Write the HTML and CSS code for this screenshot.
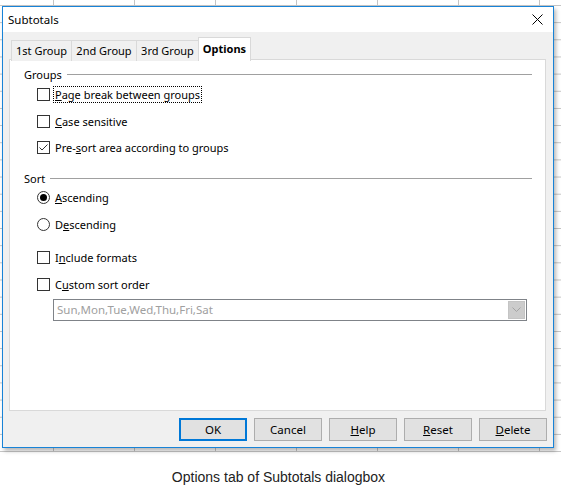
FILE: index.html
```html
<!DOCTYPE html>
<html>
<head>
<meta charset="utf-8">
<link rel="stylesheet" href="styles.css">
</head>
<body>
<div class="sheet">
  <div class="dialog">
    <div class="titlebar">
      <span class="title">Subtotals</span>
      <svg class="close" width="11" height="11" viewBox="0 0 11 11"><path d="M0.5 0.5L10.5 10.5M10.5 0.5L0.5 10.5" stroke="#000" stroke-width="1" fill="none"/></svg>
    </div>
    <div class="body">
      <div class="tabs">
        <div class="tab t1">1st Group</div>
        <div class="tab t2">2nd Group</div>
        <div class="tab t3">3rd Group</div>
        <div class="tab active">Options</div>
      </div>
      <div class="panel">
        <div class="section first"><span class="legend">Groups</span><span class="rule"></span></div>
        <div class="opt r-page"><svg class="box" width="13" height="13" viewBox="0 0 13 13"><rect x="0.5" y="0.5" width="12" height="12" fill="#fff" stroke="#333"/></svg><span class="text focus"><u>P</u>age break between groups</span></div>
        <div class="opt r-case"><svg class="box" width="13" height="13" viewBox="0 0 13 13"><rect x="0.5" y="0.5" width="12" height="12" fill="#fff" stroke="#333"/></svg><span class="text"><u>C</u>ase sensitive</span></div>
        <div class="opt r-pre"><svg class="box" width="13" height="13" viewBox="0 0 13 13"><rect x="0.5" y="0.5" width="12" height="12" fill="#fff" stroke="#333"/><path d="M2.5 6.5L5 9L10.5 3.5" stroke="#333" fill="none"/></svg><span class="text">Pre-<u>s</u>ort area according to groups</span></div>
        <div class="section sort"><span class="legend">Sort</span><span class="rule"></span></div>
        <div class="opt r-asc"><svg class="box" width="13" height="13" viewBox="0 0 13 13"><circle cx="6.5" cy="6.5" r="6" fill="#fff" stroke="#333"/><circle cx="6.5" cy="6.5" r="3.5" fill="#000"/></svg><span class="text"><u>A</u>scending</span></div>
        <div class="opt r-desc"><svg class="box" width="13" height="13" viewBox="0 0 13 13"><circle cx="6.5" cy="6.5" r="6" fill="#fff" stroke="#333"/></svg><span class="text">D<u>e</u>scending</span></div>
        <div class="opt r-inc"><svg class="box" width="13" height="13" viewBox="0 0 13 13"><rect x="0.5" y="0.5" width="12" height="12" fill="#fff" stroke="#333"/></svg><span class="text">I<u>n</u>clude formats</span></div>
        <div class="opt r-cust"><svg class="box" width="13" height="13" viewBox="0 0 13 13"><rect x="0.5" y="0.5" width="12" height="12" fill="#fff" stroke="#333"/></svg><span class="text">C<u>u</u>stom sort order</span></div>
        <div class="combo">
          <span class="combo-text">Sun,Mon,Tue,Wed,Thu,Fri,Sat</span>
          <span class="drop"><svg width="9" height="6" viewBox="0 0 9 6"><path d="M0.5 0.5L4.5 4.5L8.5 0.5" stroke="#a4a4a4" fill="none"/></svg></span>
        </div>
      </div>
      <div class="buttons">
        <div class="btn default">OK</div>
        <div class="btn">Cancel</div>
        <div class="btn"><u>H</u>elp</div>
        <div class="btn"><u>R</u>eset</div>
        <div class="btn"><u>D</u>elete</div>
      </div>
    </div>
  </div>
</div>
<div class="caption">Options tab of Subtotals dialogbox</div>
</body>
</html>
```

FILE: styles.css
```css
html, body {
  margin: 0;
  padding: 0;
  background: #fff;
}
body {
  width: 561px;
  height: 488px;
  overflow: hidden;
  font-family: "Noto Sans", "Open Sans", sans-serif;
  font-size: 11px;
  color: #000;
}
.sheet {
  height: 452px;
  box-sizing: border-box;
  padding: 6px 0 0 2px;
  background-color: #fff;
  background-image:
    linear-gradient(to right, #c4c4c4 1px, transparent 1px),
    linear-gradient(to bottom, #c4c4c4 1px, transparent 1px);
  background-size: 81px 100%, 100% 17.17px;
  background-position: 53px 0, 0 5px;
}
.dialog {
  width: 552px;
  height: 442px;
  box-sizing: border-box;
  border: 1px solid #1883d7;
  background: #f0f0f0;
  display: flex;
  flex-direction: column;
  box-shadow: 2px 3px 4px rgba(0,0,0,0.28);
}
.titlebar {
  height: 25px;
  flex: none;
  background: #fff;
  display: flex;
  align-items: center;
  justify-content: space-between;
  padding: 0 10px 0 5px;
}
.title {
  line-height: 16px;
  margin-top: 1px;
  font-size: 11.5px;
}
.close {
  display: block;
}
.body {
  flex: 1;
  display: flex;
  flex-direction: column;
  padding: 5px 6px 6px 6px;
}
.tabs {
  display: flex;
  height: 23px;
  padding-left: 2px;
  position: relative;
  z-index: 1;
  margin-bottom: -1px;
}
.tab {
  box-sizing: border-box;
  margin-top: 3px;
  height: 21px;
  border: 1px solid #d9d9d9;
  border-bottom: none;
  background: #f0f0f0;
  text-align: center;
  line-height: 19px;
  color: #000;
}
.tab + .tab { margin-left: -1px; }
.t1 { width: 61px; }
.t2 { width: 66px; }
.t3 { width: 63px; }
.tab.active {
  margin-top: 0;
  height: 24px;
  width: 53px;
  background: #fff;
  font-weight: bold;
  line-height: 21px;
}
.panel {
  flex: 1;
  background: #fff;
  border: 1px solid #d9d9d9;
  margin-right: 1px;
  padding: 6px 0 0 0;
  display: flex;
  flex-direction: column;
}
.section {
  display: flex;
  align-items: center;
  height: 17px;
  padding-left: 14px;
  padding-right: 13px;
}
.section.sort { margin-top: 14px; }
.legend { line-height: 16px; }
.rule {
  flex: 1;
  height: 1px;
  background: #a0a0a0;
  margin-left: 5px;
  margin-top: -1px;
}
.opt {
  display: flex;
  align-items: center;
  height: 18px;
  padding-left: 27px;
}
.box { display: block; flex: none; }
.text {
  margin-left: 3px;
  padding: 0 1px;
  line-height: 15px;
  border: 1px solid transparent;
  white-space: nowrap;
}
.text.focus { border: 1px dotted #000; }
.r-page { margin-top: 2px; }
.r-case { margin-top: 9px; }
.r-pre { margin-top: 8px; }
.r-asc { margin-top: 1px; }
.r-desc { margin-top: 9px; }
.r-inc { margin-top: 15px; }
.r-cust { margin-top: 9px; }
.combo {
  margin: 6px 18px 0 43px;
  height: 22px;
  box-sizing: border-box;
  border: 1px solid #7f8388;
  display: flex;
  align-items: center;
  justify-content: space-between;
  padding: 0 1px 0 3px;
}
.combo-text { color: #a0a0a0; line-height: 16px; font-size: 11.5px; }
.drop {
  width: 17px;
  height: 18px;
  background: #cccccc;
  border: 1px solid #c4c4c4;
  box-sizing: border-box;
  display: flex;
  align-items: center;
  justify-content: center;
}
.drop svg { display: block; }
.buttons {
  display: flex;
  justify-content: flex-end;
  gap: 7px;
  margin-top: 7px;
}
.btn {
  width: 68px;
  height: 23px;
  box-sizing: border-box;
  background: #e1e1e1;
  border: 1px solid #adadad;
  display: flex;
  align-items: center;
  justify-content: center;
  line-height: 16px;
  font-size: 11.5px;
}
.btn.default { border: 2px solid #0078d7; }
.caption {
  margin-top: 17px;
  text-align: center;
  padding-right: 4px;
  font-family: "Liberation Sans", Arial, sans-serif;
  font-size: 14px;
  line-height: 16px;
  color: #222;
}
```
